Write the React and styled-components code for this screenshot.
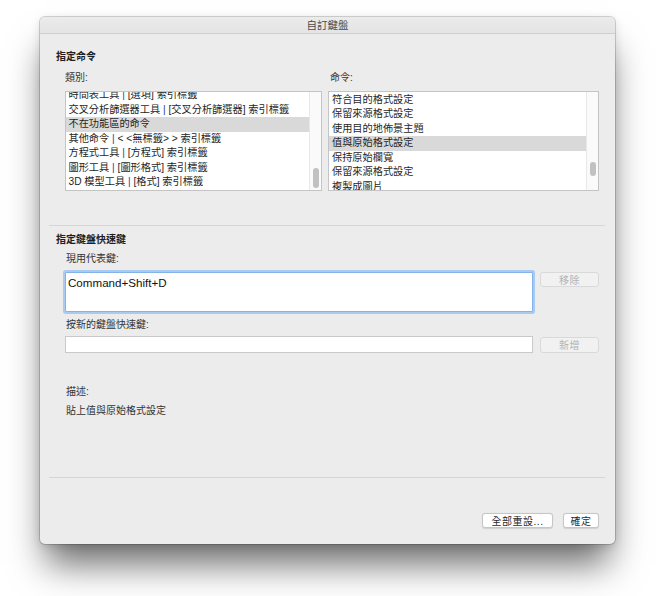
import React from 'react'
import styled, { createGlobalStyle, css } from 'styled-components'

const GlobalStyle = createGlobalStyle`
  html, body {
    margin: 0;
    padding: 0;
    background: #ffffff;
  }
  body {
    width: 656px;
    height: 596px;
    overflow: hidden;
    font-family: 'Liberation Sans', 'Noto Sans CJK TC', sans-serif;
    font-size: 10px;
    color: #222222;
  }
`

const Window = styled.div`
  box-sizing: border-box;
  width: 575px;
  height: 527px;
  margin: 17px 0 0 40px;
  display: flex;
  flex-direction: column;
  background: #ececec;
  border-radius: 5px;
  box-shadow: 0 26px 34px -6px rgba(0, 0, 0, 0.58), 0 2px 10px rgba(0, 0, 0, 0.12),
    0 0 0 1px rgba(0, 0, 0, 0.16);
  overflow: hidden;
`

const TitleBar = styled.div`
  height: 16px;
  flex: none;
  border-bottom: 1px solid #cfcfcf;
  background: linear-gradient(#ebebeb, #e4e4e4);
  display: flex;
  align-items: center;
  justify-content: center;
  font-size: 10.5px;
  color: #4a4a4a;
  line-height: 16px;
`

const Body = styled.div`
  display: flex;
  flex-direction: column;
  padding: 0 16px;
`

const Heading = styled.div`
  font-weight: 700;
  line-height: 14px;
  margin-top: ${p => p.$top}px;
  color: #1e1e1e;
`

const Label = styled.div`
  line-height: 14px;
  margin-top: ${p => p.$top || 0}px;
  padding-left: ${p => p.$indent || 0}px;
  color: #333333;
`

const ListsRow = styled.div`
  display: grid;
  grid-template-columns: 257px 271px;
  column-gap: 6px;
  padding-left: 9px;
  margin-top: 6.7px;
`

const Column = styled.div`
  display: flex;
  flex-direction: column;
`

const ListBox = styled.div`
  box-sizing: border-box;
  margin-top: 6.3px;
  height: 100px;
  border: 1px solid #c4c4c4;
  background: #ffffff;
  display: flex;
  overflow: hidden;
`

const Rows = styled.div`
  flex: 1;
  min-width: 0;
  margin-top: ${p => p.$offset}px;
`

const Row = styled.div`
  height: 14.5px;
  line-height: 14.5px;
  padding-left: ${p => p.$pad}px;
  white-space: nowrap;
  font-size: 10.2px;
  color: #1f1f1f;
  ${p =>
    p.$selected &&
    css`
      background: #d9d9d9;
    `};
`

const Pipe = styled.span`
  color: #2f3f8f;
`

const ScrollTrack = styled.div`
  width: 11px;
  flex: none;
  border-left: 1px solid #e8e8e8;
  background: #fafafa;
  position: relative;
`

const Thumb = styled.div`
  position: absolute;
  left: 3px;
  width: 6px;
  border-radius: 3px;
  background: #c1c1c1;
`

const Separator = styled.div`
  height: 1px;
  background: #d6d6d6;
  margin: ${p => p.$top}px -6px 0 -7px;
`

const FieldRow = styled.div`
  display: flex;
  align-items: ${p => p.$align};
  gap: 7px;
  padding-left: 9px;
  margin-top: ${p => p.$top}px;
`

const KeyArea = styled.div`
  box-sizing: border-box;
  width: 468px;
  height: 40px;
  background: #ffffff;
  border: 1px solid #84b3ea;
  box-shadow: 0 0 0 2px #a9cbf2;
  border-radius: 1px;
  padding: 3px 2px 0;
  font-size: 11.6px;
  line-height: 14px;
  color: #111111;
`

const KeyInput = styled.div`
  box-sizing: border-box;
  width: 468px;
  height: 17px;
  background: #ffffff;
  border: 1px solid #c9c9c9;
`

const Button = styled.div`
  box-sizing: border-box;
  width: ${p => p.$w}px;
  height: 15.5px;
  display: flex;
  align-items: center;
  justify-content: center;
  border-radius: 3px;
  font-size: 10px;
  letter-spacing: 0.5px;
  ${p =>
    p.$disabled
      ? css`
          background: #f1f1f1;
          border: 1px solid #d9d9d9;
          color: #b3b3b3;
        `
      : css`
          background: #ffffff;
          border: 1px solid #c6c6c6;
          box-shadow: 0 0.5px 1px rgba(0, 0, 0, 0.12);
          color: #2a2a2a;
        `};
`

const Footer = styled.div`
  display: flex;
  justify-content: flex-end;
  gap: 10px;
  margin-top: 34.3px;
`

const categories = [
  ['時間表工具', '[選項] 索引標籤'],
  ['交叉分析篩選器工具', '[交叉分析篩選器] 索引標籤'],
  ['不在功能區的命令'],
  ['其他命令', '< <無標籤> > 索引標籤'],
  ['方程式工具', '[方程式] 索引標籤'],
  ['圖形工具', '[圖形格式] 索引標籤'],
  ['3D 模型工具', '[格式] 索引標籤'],
]

const commands = [
  '符合目的格式設定',
  '保留來源格式設定',
  '使用目的地佈景主題',
  '值與原始格式設定',
  '保持原始欄寬',
  '保留來源格式設定',
  '複製成圖片',
]

const App = () => (
  <>
    <GlobalStyle />
    <Window>
      <TitleBar>自訂鍵盤</TitleBar>
      <Body>
        <Heading $top={16}>指定命令</Heading>
        <ListsRow>
          <Column>
            <Label>類別:</Label>
            <ListBox>
              <Rows $offset={-3.8}>
                {categories.map(([name, tab], i) => (
                  <Row key={i} $pad={2.5} $selected={i === 2}>
                    {name}
                    {tab && (
                      <>
                        {' '}
                        <Pipe>|</Pipe> {tab}
                      </>
                    )}
                  </Row>
                ))}
              </Rows>
              <ScrollTrack>
                <Thumb style={{ top: 76, height: 20 }} />
              </ScrollTrack>
            </ListBox>
          </Column>
          <Column>
            <Label $indent={2}>命令:</Label>
            <ListBox>
              <Rows $offset={0.7}>
                {commands.map((c, i) => (
                  <Row key={i} $pad={3} $selected={i === 3}>
                    {c}
                  </Row>
                ))}
              </Rows>
              <ScrollTrack>
                <Thumb style={{ top: 70, height: 14 }} />
              </ScrollTrack>
            </ListBox>
          </Column>
        </ListsRow>

        <Separator $top={34} />

        <Heading $top={7}>指定鍵盤快速鍵</Heading>
        <Label $top={5} $indent={10}>現用代表鍵:</Label>
        <FieldRow $top={6} $align="flex-start">
          <KeyArea>Command+Shift+D</KeyArea>
          <Button $w={59} $disabled>移除</Button>
        </FieldRow>
        <Label $top={6} $indent={10}>按新的鍵盤快速鍵:</Label>
        <FieldRow $top={4.3} $align="center">
          <KeyInput />
          <Button $w={59} $disabled>新增</Button>
        </FieldRow>

        <Label $top={32} $indent={10}>描述:</Label>
        <Label $top={5} $indent={10}>貼上值與原始格式設定</Label>

        <Separator $top={59} />

        <Footer>
          <Button $w={71}>全部重設...</Button>
          <Button $w={36}>確定</Button>
        </Footer>
      </Body>
    </Window>
  </>
)

export default App
